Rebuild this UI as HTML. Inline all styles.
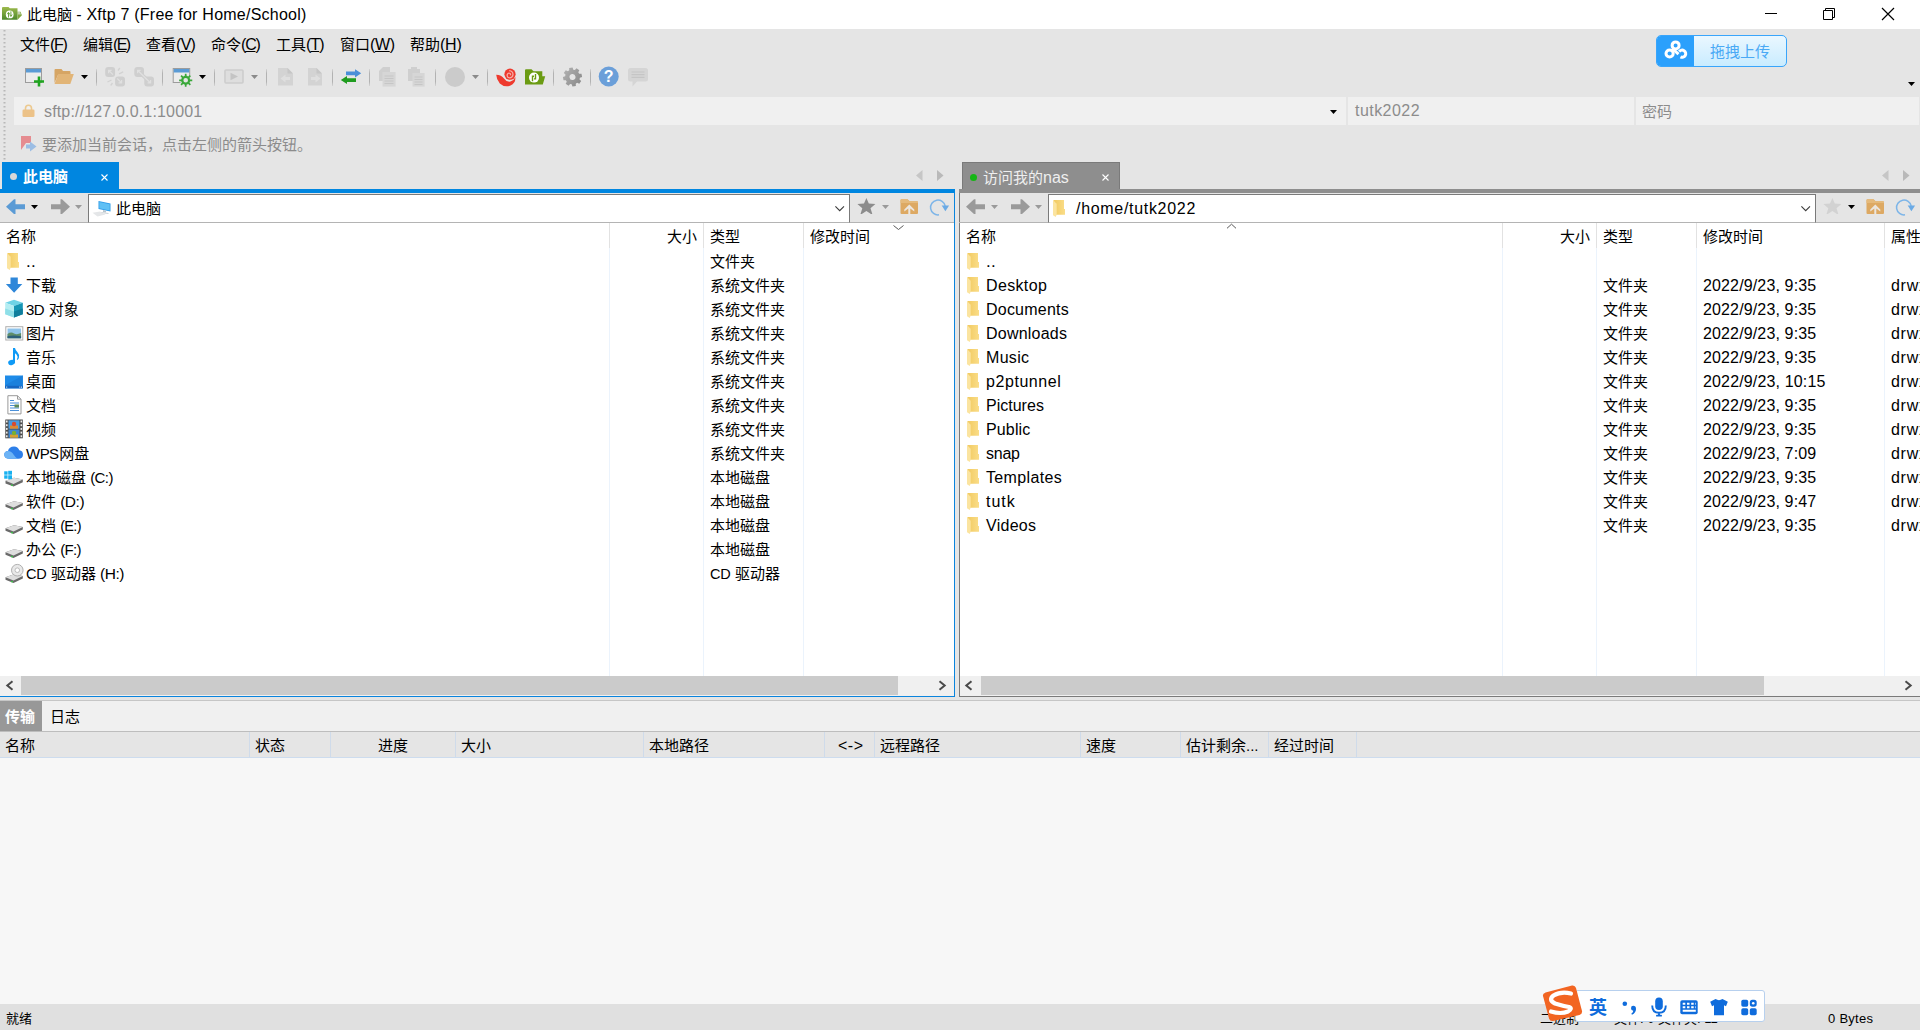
<!DOCTYPE html>
<html lang="zh-CN"><head><meta charset="utf-8"><title>此电脑 - Xftp 7 (Free for Home/School)</title>
<style>
*{box-sizing:border-box;margin:0;padding:0}
html,body{width:1920px;height:1030px;overflow:hidden;background:#e5e5e5}
body{position:relative;font-family:"Liberation Sans","Noto Sans CJK SC",sans-serif;font-size:15px;color:#000}
.a{position:absolute}
.t{position:absolute;white-space:nowrap;line-height:20px;height:20px}
svg{position:absolute;overflow:visible}
#title{left:0;top:0;width:1920px;height:29px;background:#fff}
.fld{background:#f0f0f0;top:97px;height:28px}
.g{color:#8c8c8c}
.sep{width:1px;height:17px;top:69px;background:linear-gradient(rgba(176,176,176,0.3),#b2b2b2 25%,#b2b2b2 75%,rgba(176,176,176,0.3))}
.pane{background:#fff}
.col{width:1px;background:#e8f0fa}
.hl{width:1px;background:#e0e0e0}
.sb{background:#f0f0f0;height:18px}
.th{background:#c9c9c9;height:18px;top:0}
.en{font-size:16px}
</style></head>
<body>
<svg width="0" height="0" style="left:0;top:0"><defs><linearGradient id="fg" x1="0" x2="1" y1="0" y2="0"><stop offset="0" stop-color="#f1c95f"/><stop offset="1" stop-color="#fadd88"/></linearGradient><linearGradient id="ag" x1="0" x2="0" y1="0" y2="1"><stop offset="0" stop-color="#9dba4c"/><stop offset="1" stop-color="#4c882b"/></linearGradient><linearGradient id="gg" x1="0" x2="1" y1="0" y2="1"><stop offset="0" stop-color="#b4b4b4"/><stop offset="1" stop-color="#868686"/></linearGradient></defs></svg>
<div class="a" id="title"></div>
<svg style="left:2px;top:6px" width="24" height="16" viewBox="0 0 24 16"><path d="M0 2Q0 1 1 1H6.500L7.800 2.300H15.500V13.800H0Z" fill="url(#ag)"/><path d="M15.500 5.700H18.500L19.900 9.200L15.500 13.800Z" fill="#7fa83c"/><path d="M15.800 6H18L19 8.500H15.800Z" fill="#c3d0b0"/><circle cx="7.700" cy="8.400" r="3.900" fill="#fff"/><path d="M6.500 11.500V7M5.300 8.200L6.500 6.300L7.700 8.200M8.900 5.300V9.800M7.700 8.600L8.900 10.500L10.100 8.600" stroke="#5e9a2e" stroke-width="0.900" fill="none"/></svg>
<div class="t " style="left:27px;top:5px;">此电脑 <span style="font-size:16px;"><span style="letter-spacing:0.23px">- Xftp 7 (Free for Home/School</span>)</span></div>
<svg style="left:1760px;top:4px" width="140" height="20" viewBox="0 0 140 20"><g fill="none" stroke="#000" stroke-width="1"><path d="M5 9.5H17"/><path d="M63.5 6.5H72.500V15.500H63.500Z"/><path d="M65.5 6.500V4.500H74.500V13.500H72.500"/><path d="M122 4L134 16M134 4L122 16" stroke-width="1.2"/></g></svg>
<div class="a" style="left:8px;top:34px;width:2px;height:405px;"></div>
<svg style="left:3px;top:30px" width="4" height="136"><path d="M1.5 0V136" stroke="#b8b8b8" stroke-width="2" stroke-dasharray="1.5 2.5" fill="none"/></svg>
<div class="t " style="left:20px;top:35px;">文件<span style="font-size:16px"><span style="letter-spacing:-1.27px">(<u>F</u></span>)</span></div>
<div class="t " style="left:83px;top:35px;">编辑<span style="font-size:16px"><span style="letter-spacing:-1.66px">(<u>E</u></span>)</span></div>
<div class="t " style="left:146px;top:35px;">查看<span style="font-size:16px"><span style="letter-spacing:-0.71px">(<u>V</u></span>)</span></div>
<div class="t " style="left:211px;top:35px;">命令<span style="font-size:16px"><span style="letter-spacing:-1.21px">(<u>C</u></span>)</span></div>
<div class="t " style="left:276px;top:35px;">工具<span style="font-size:16px"><span style="letter-spacing:-0.97px">(<u>T</u></span>)</span></div>
<div class="t " style="left:340px;top:35px;">窗口<span style="font-size:16px"><span style="letter-spacing:-0.38px">(<u>W</u></span>)</span></div>
<div class="t " style="left:410px;top:35px;">帮助<span style="font-size:16px"><span style="letter-spacing:-0.26px">(<u>H</u></span>)</span></div>
<div class="a" style="left:1656px;top:35px;width:131px;height:32px;border-radius:5px;border:1px solid #39a5fb;background:linear-gradient(#eaf7ff,#c9ecff);overflow:hidden"><div class="a" style="left:-1px;top:-1px;width:38px;height:32px;background:#2ba0fc"></div></div>
<svg style="left:1663px;top:41px" width="24" height="20" viewBox="0 0 24 20"><g fill="none" stroke="#fff" stroke-width="3"><circle cx="12.600" cy="4.400" r="3.500"/><circle cx="6.600" cy="12.500" r="3.600"/><path d="M16.200 10.600A3.600 3.600 0 1 1 17.500 15.900"/></g><path d="M9.300 7.500L15.500 13.200" stroke="#fff" stroke-width="3"/></svg>
<div class="t " style="left:1710px;top:42px;color:#4aa9f5;font-size:15px">拖拽上传</div>
<svg style="left:1908px;top:82px" width="8" height="5"><path d="M0 0H7L3.5 4Z" fill="#000"/></svg>
<svg style="left:24px;top:66px" width="24" height="22" viewBox="0 0 24 22"><rect x="1.500" y="2.500" width="16" height="14" fill="#ececec" stroke="#9c9c9c"/><rect x="2" y="3" width="15" height="3.500" fill="#5b9bd5"/><path d="M15 10.500V20.500M10 15.500H20" stroke="#1fa51f" stroke-width="2.600" fill="none"/></svg>
<svg style="left:54px;top:66px" width="24" height="22" viewBox="0 0 24 22"><path d="M0.500 4Q0.500 3 1.500 3H7.500L9 5H15.500Q16.500 5 16.500 6V9H4L0.500 17Z" fill="#d6a564"/><path d="M4.200 8H19.800L16.300 18H0.500Z" fill="#e2b577"/></svg>
<svg style="left:81px;top:75px" width="8" height="5"><path d="M0 0H7L3.5 4Z" fill="#000"/></svg>
<div class="a sep" style="left:96px"></div>
<svg style="left:105px;top:66px" width="24" height="22" viewBox="0 0 24 22"><rect x="0.200" y="1" width="9.900" height="10" rx="3" fill="#cfcfcf"/><rect x="10.100" y="10.600" width="9.900" height="9.900" rx="3" fill="#cfcfcf"/><path d="M3.600 7.300V4.300H6.600M3.800 4.500L8 8.700M13.600 16.900H16.600V13.900M16.400 16.700L12.200 12.500" stroke="#e0e0e0" stroke-width="1.200" fill="none"/><path d="M13 4.500L14.800 2M14 7.800L18.200 5.800M6.500 14L2.500 16M7.500 17L5.700 19.500" stroke="#d2d2d2" stroke-width="1.300"/></svg>
<svg style="left:134px;top:66px" width="24" height="22" viewBox="0 0 24 22"><rect x="0.300" y="1" width="9.700" height="10" rx="3" fill="#cfcfcf"/><rect x="10.300" y="10.600" width="9.700" height="9.900" rx="3" fill="#cfcfcf"/><path d="M5 6L15.200 15.500" stroke="#cfcfcf" stroke-width="3.600"/><path d="M3.600 7.300V4.300H6.600M3.800 4.500L16.300 16.800M13.600 16.900H16.600V13.900" stroke="#e0e0e0" stroke-width="1.200" fill="none"/></svg>
<div class="a sep" style="left:162px"></div>
<svg style="left:172px;top:66px" width="24" height="22" viewBox="0 0 24 22"><rect x="1.200" y="2.500" width="16.500" height="14" fill="#ececec" stroke="#9c9c9c"/><rect x="1.700" y="3" width="15.500" height="3.500" fill="#5b9bd5"/><circle cx="13.700" cy="14.300" r="5.800" fill="#e5e5e5"/><path d="M18.21 13.40L20.25 13.47L20.25 15.13L18.21 15.20L17.52 16.86L18.92 18.35L17.75 19.52L16.26 18.12L14.60 18.81L14.53 20.85L12.87 20.85L12.80 18.81L11.14 18.12L9.65 19.52L8.48 18.35L9.88 16.86L9.19 15.20L7.15 15.13L7.15 13.47L9.19 13.40L9.88 11.74L8.48 10.25L9.65 9.08L11.14 10.48L12.80 9.79L12.87 7.75L14.53 7.75L14.60 9.79L16.26 10.48L17.75 9.08L18.92 10.25L17.52 11.74ZM16.00 14.30A2.3 2.3 0 1 0 11.40 14.30A2.3 2.3 0 1 0 16.00 14.30Z" fill="#3aa83a" fill-rule="evenodd"/></svg>
<svg style="left:199px;top:75px" width="8" height="5"><path d="M0 0H7L3.5 4Z" fill="#000"/></svg>
<div class="a sep" style="left:214px"></div>
<svg style="left:222px;top:66px" width="24" height="22" viewBox="0 0 24 22"><rect x="3" y="4" width="18" height="13" rx="1" fill="#dedede" stroke="#cdcdcd" stroke-width="1.600"/><path d="M8.500 6.800V14.200L16 10.500Z" fill="#c4c4c4"/></svg>
<svg style="left:251px;top:75px" width="8" height="5"><path d="M0 0H7L3.5 4Z" fill="#8a8a8a"/></svg>
<div class="a sep" style="left:266px"></div>
<svg style="left:276px;top:66px" width="24" height="22" viewBox="0 0 24 22"><path d="M2 2H11.500L17 7.500V19.500H2Z" fill="#d3d3d3"/><path d="M11.500 2V7.500H17Z" fill="#c6c6c6"/><path d="M4.500 12.500L9.500 8.500V11H14V14H9.500V16.500Z" fill="#dfdfdf"/></svg>
<svg style="left:305px;top:66px" width="24" height="22" viewBox="0 0 24 22"><path d="M3 2H11.500L17 7.500V19.500H3Z" fill="#d3d3d3"/><path d="M11.500 2V7.500H17Z" fill="#c6c6c6"/><path d="M15.500 12.500L10.500 8.500V11H6V14H10.500V16.500Z" fill="#dfdfdf"/></svg>
<div class="a sep" style="left:332px"></div>
<svg style="left:340px;top:66px" width="24" height="22" viewBox="0 0 24 22"><path d="M6 5.500H15V3.200L21.200 7.300L15 11.400V9.200H6Z" fill="#4a8fd8"/><path d="M16 12.200H7V9.900L0.800 14L7 18.100V15.900H16Z" fill="#1f9c1f"/></svg>
<div class="a sep" style="left:369px"></div>
<svg style="left:378px;top:66px" width="24" height="22" viewBox="0 0 24 22"><path d="M1 5L5 1H12V15H1Z" fill="#cfcfcf"/><path d="M4.500 6H17.600V20.600H4.500Z" fill="#d6d6d6"/><path d="M6.500 10H15.500M6.500 12.500H15.500M6.500 15H15.500M6.500 17.500H15.500" stroke="#c6c6c6" stroke-width="1"/></svg>
<svg style="left:407px;top:66px" width="24" height="22" viewBox="0 0 24 22"><path d="M1 3H4V1H10V3H13V15H1Z" fill="#cfcfcf"/><path d="M5.500 7H17.600V20.600H5.500Z" fill="#d6d6d6"/><path d="M7.500 11H15.500M7.500 13.500H15.500M7.500 16H15.500M7.500 18.500H15.500" stroke="#c6c6c6" stroke-width="1"/></svg>
<div class="a sep" style="left:435px"></div>
<svg style="left:444px;top:66px" width="24" height="22" viewBox="0 0 24 22"><circle cx="11" cy="11" r="10" fill="#cbcbcb"/></svg>
<svg style="left:472px;top:75px" width="8" height="5"><path d="M0 0H7L3.5 4Z" fill="#8a8a8a"/></svg>
<div class="a sep" style="left:487px"></div>
<svg style="left:495px;top:66px" width="24" height="22" viewBox="0 0 24 22"><path d="M1.200 8.800Q6.500 9 9 12.500Q11.500 16.300 15.500 15.600Q19 14.600 20.300 11Q21 17 15.500 19.600Q9.500 21.800 4.800 17.500Q1.500 13.800 1.200 8.800Z" fill="#ee3a2e"/><circle cx="15" cy="8.200" r="5.600" fill="#ee3a2e"/><path d="M14.200 4.600Q18 5 18 8.600Q17.500 12 14.300 11.800Q11.800 11.300 12.200 8.800Q12.800 6.800 14.800 7.300Q16 8 15.300 9.300" fill="none" stroke="#f6aaa4" stroke-width="1.300"/></svg>
<svg style="left:524px;top:66px" width="24" height="22" viewBox="0 0 24 22"><path d="M1 4.300Q1 3.300 2 3.300H7.500L9.500 5.300H18.300V10.300H21.200L18.800 18.400H1Z" fill="#6b9b13"/><circle cx="10" cy="11.600" r="5" fill="#fff"/><path d="M8.500 15.300V10.300H10M11.500 7.900V12.900H10" stroke="#6b9b13" stroke-width="1.400" fill="none"/></svg>
<div class="a sep" style="left:553px"></div>
<svg style="left:562px;top:66px" width="24" height="22" viewBox="0 0 24 22"><g transform="rotate(-10 10.5 11)"><path d="M17.61 8.94L19.94 9.27L19.94 12.73L17.61 13.06L16.98 14.56L18.40 16.46L15.96 18.90L14.06 17.48L12.56 18.11L12.23 20.44L8.77 20.44L8.44 18.11L6.94 17.48L5.04 18.90L2.60 16.46L4.02 14.56L3.39 13.06L1.06 12.73L1.06 9.27L3.39 8.94L4.02 7.44L2.60 5.54L5.04 3.10L6.94 4.52L8.44 3.89L8.77 1.56L12.23 1.56L12.56 3.89L14.06 4.52L15.96 3.10L18.40 5.54L16.98 7.44ZM13.50 11.00A3 3 0 1 0 7.50 11.00A3 3 0 1 0 13.50 11.00Z" fill="url(#gg)" fill-rule="evenodd"/></g></svg>
<div class="a sep" style="left:590px"></div>
<svg style="left:598px;top:66px" width="24" height="22" viewBox="0 0 24 22"><circle cx="10.700" cy="10.500" r="10" fill="#6b9fd9"/><text x="10.700" y="16" font-family="Liberation Sans,sans-serif" font-size="16" font-weight="bold" fill="#fff" text-anchor="middle">?</text></svg>
<svg style="left:627px;top:66px" width="24" height="22" viewBox="0 0 24 22"><path d="M3.500 2H18.500Q21 2 21 4.500V13Q21 15.500 18.500 15.500H10L5.500 20.500V15.500H3.500Q1 15.500 1 13V4.500Q1 2 3.500 2Z" fill="#d5d5d5"/><path d="M4.500 6H17.500M4.500 8.700H17.500M4.500 11.400H17.500" stroke="#c5c5c5" stroke-width="1.200"/></svg>
<div class="a fld" style="left:14px;width:1332px"></div>
<div class="a fld" style="left:1348px;width:286px"></div>
<div class="a fld" style="left:1636px;width:283px"></div>
<svg style="left:22px;top:104px" width="13" height="13" viewBox="0 0 13 13"><path d="M3.500 6V4.200A3 3 0 0 1 9.500 4.200V6" fill="none" stroke="#ecc98f" stroke-width="1.600"/><rect x="0.500" y="5.500" width="12" height="7.500" rx="1.300" fill="#ecc288"/></svg>
<div class="t g" style="left:44px;top:102px;"><span style="font-size:16px;"><span style="letter-spacing:0.16px">sftp://127.0.0.1:1000</span>1</span></div>
<svg style="left:1330px;top:110px" width="8" height="5"><path d="M0 0H7L3.5 4Z" fill="#000"/></svg>
<div class="t g" style="left:1355px;top:101px;"><span style="font-size:16px;"><span style="letter-spacing:0.45px">tutk202</span>2</span></div>
<div class="t g" style="left:1642px;top:102px;">密码</div>
<svg style="left:20px;top:135px" width="17" height="18" viewBox="0 0 17 18"><path d="M1 1H11V8L6 8L1 15Z" fill="#e58c90"/><path d="M10 6.500L16.500 11.500L10 16.500V13.500H6V9.500H10Z" fill="#9bbde4"/></svg>
<div class="t g" style="left:42px;top:135px;">要添加当前会话，点击左侧的箭头按钮。</div>
<div class="a" style="left:2px;top:162px;width:117px;height:28px;background:#0086e0;"></div>
<div class="a" style="left:10px;top:173px;width:7px;height:7px;border-radius:50%;background:#d8d8d8"></div>
<div class="t " style="left:23px;top:167px;color:#fff;font-weight:bold;font-size:15px">此电脑</div>
<svg style="left:101px;top:174px" width="7" height="7"><path d="M0.5 0.5L6.5 6.5M6.500 0.500L0.500 6.500" stroke="#fff" stroke-width="1.1" fill="none"/></svg>
<div class="a" style="left:0px;top:189px;width:955px;height:4px;background:#0086e0;"></div>
<svg style="left:916px;top:170px" width="30" height="12"><path d="M6.500 0V11L0 5.500Z" fill="#c6c6c6"/><path d="M21 0V11L27.500 5.500Z" fill="#b9b9b9"/></svg>
<svg style="left:1882px;top:170px" width="30" height="12"><path d="M6.500 0V11L0 5.500Z" fill="#c6c6c6"/><path d="M21 0V11L27.500 5.500Z" fill="#b9b9b9"/></svg>
<div class="a" style="left:962px;top:162px;width:158px;height:28px;background:#8e8e8e;border:1px solid #7a7a7a;border-bottom:0"></div>
<div class="a" style="left:970px;top:174px;width:7px;height:7px;border-radius:50%;background:#14b614"></div>
<div class="t " style="left:983px;top:168px;color:#efefef;font-size:15px">访问我的<span class="en">nas</span></div>
<svg style="left:1102px;top:174px" width="7" height="7"><path d="M0.5 0.5L6.5 6.5M6.500 0.500L0.500 6.500" stroke="#fff" stroke-width="1.1" fill="none"/></svg>
<div class="a" style="left:959px;top:189px;width:961px;height:4px;background:#8e8e8e;"></div>
<div class="a" style="left:0px;top:193px;width:955px;height:30px;background:#e5e5e5;"></div>
<div class="a" style="left:0px;top:223px;width:955px;height:453px;background:#fff;"></div>
<div class="a" style="left:0px;top:676px;width:955px;height:20px;background:#f0f0f0;"></div>
<div class="a" style="left:0px;top:222px;width:955px;height:1px;background:#b4b4b4;"></div>
<div class="a" style="left:954px;top:193px;width:1px;height:504px;background:#0a84dd;"></div>
<div class="a" style="left:0px;top:696px;width:955px;height:1px;background:#0a84dd;"></div>
<div class="a" style="left:959px;top:193px;width:961px;height:30px;background:#e5e5e5;"></div>
<div class="a" style="left:959px;top:223px;width:961px;height:453px;background:#fff;"></div>
<div class="a" style="left:959px;top:676px;width:961px;height:20px;background:#f0f0f0;"></div>
<div class="a" style="left:959px;top:193px;width:1px;height:504px;background:#7a7a7a;"></div>
<div class="a" style="left:959px;top:222px;width:961px;height:1px;background:#b4b4b4;"></div>
<div class="a" style="left:959px;top:696px;width:961px;height:1px;background:#7a7a7a;"></div>
<div class="a" style="left:88px;top:194px;width:762px;height:29px;background:#fff;border:1px solid #7a7a7a;border-bottom-color:#b4b4b4"></div>
<svg style="left:835px;top:206px" width="10" height="6"><path d="M0.400 0.400L4.700 4.700L9 0.400" stroke="#3c3c3c" stroke-width="1.100" fill="none"/></svg>
<div class="a" style="left:1048px;top:194px;width:768px;height:29px;background:#fff;border:1px solid #7a7a7a;border-bottom-color:#b4b4b4"></div>
<svg style="left:1801px;top:206px" width="10" height="6"><path d="M0.400 0.400L4.700 4.700L9 0.400" stroke="#3c3c3c" stroke-width="1.100" fill="none"/></svg>
<svg style="left:6px;top:198px" width="20" height="18" viewBox="0 0 20 18"><path d="M0 8.700L8 1.300H9.500V6.200H19V11.200H9.500V16.100H8Z" fill="#5b9bd5"/></svg>
<svg style="left:31px;top:205px" width="8" height="5"><path d="M0 0H7L3.5 4Z" fill="#000"/></svg>
<svg style="left:50px;top:198px" width="20" height="18" viewBox="0 0 20 18"><path d="M20 8.700L12 1.300H10.500V6.200H1V11.200H10.500V16.100H12Z" fill="#9a9a9a"/></svg>
<svg style="left:75px;top:205px" width="8" height="5"><path d="M0 0H7L3.5 4Z" fill="#9a9a9a"/></svg>
<svg style="left:966px;top:198px" width="20" height="18" viewBox="0 0 20 18"><path d="M0 8.700L8 1.300H9.500V6.200H19V11.200H9.500V16.100H8Z" fill="#9a9a9a"/></svg>
<svg style="left:991px;top:205px" width="8" height="5"><path d="M0 0H7L3.5 4Z" fill="#9a9a9a"/></svg>
<svg style="left:1010px;top:198px" width="20" height="18" viewBox="0 0 20 18"><path d="M20 8.700L12 1.300H10.500V6.200H1V11.200H10.500V16.100H12Z" fill="#9a9a9a"/></svg>
<svg style="left:1035px;top:205px" width="8" height="5"><path d="M0 0H7L3.5 4Z" fill="#9a9a9a"/></svg>
<svg style="left:92px;top:200px" width="20" height="18" viewBox="0 0 20 18"><path d="M6.500 1L18.500 3.500V11.500L6.500 9Z" fill="#2f9be8"/><path d="M7.300 2L17.700 4.200V10.500L7.300 8.300Z" fill="#5fc0f5"/><path d="M11 10L14 10.700V12.500L11 12Z" fill="#b8c4cc"/><path d="M9 12L16.500 13V14L9 13Z" fill="#c8d0d6"/><path d="M0.500 12.800L8 11.500L13.500 14.500L5.500 16.500Z" fill="#e4e6e8"/></svg>
<div class="t " style="left:116px;top:199px;">此电脑</div>
<svg style="left:1052px;top:199px" width="14" height="19" viewBox="0 0 14 19"><path d="M1.200 1H12V10H13V15.800H3V4Z" fill="url(#fg)"/><path d="M1 1.200L4.700 4.800V15.500L3.800 18L1 16.300Z" fill="#fbe4a0"/></svg>
<div class="t " style="left:1076px;top:199px;"><span style="font-size:16px;"><span style="letter-spacing:0.69px">/home/tutk202</span>2</span></div>
<svg style="left:857px;top:198px" width="19" height="18" viewBox="0 0 19 18"><path d="M9.400 0L11.800 5.400L18.400 5.900L13.500 10.200L15.300 16H14L9.400 13L4.800 16H3.500L5.300 10.200L0.400 5.900L7 5.400Z" fill="#8c8c8c"/></svg>
<svg style="left:882px;top:205px" width="8" height="5"><path d="M0 0H7L3.5 4Z" fill="#9a9a9a"/></svg>
<svg style="left:900px;top:198px" width="19" height="19" viewBox="0 0 19 19"><path d="M0.500 2.200Q0.500 1.200 1.500 1.200H7.500L9.500 3.200H17Q18 3.200 18 4.200V15Q18 16 17 16H1.500Q0.500 16 0.500 15Z" fill="#dda963"/><path d="M0.500 2.200Q0.500 1.200 1.500 1.200H7.500L9.500 3.200H17Q18 3.200 18 4.200V5H0.500Z" fill="#e5ba7c"/><path d="M9.300 6.500L14.300 11.500V13.500L10.300 10.500V18.500H8.300V10.500L4.300 13.500V11.500Z" fill="#ece6df"/></svg>
<svg style="left:929px;top:197px" width="22" height="20" viewBox="0 0 22 20"><path d="M10 17.800A7.400 7.400 0 1 1 16.200 9" fill="none" stroke="#7db5e8" stroke-width="1.500"/><path d="M12.700 8.500H20.100L16.400 14.200Z" fill="#6aaae5"/></svg>
<svg style="left:1823px;top:198px" width="19" height="18" viewBox="0 0 19 18"><path d="M9.400 0L11.800 5.400L18.400 5.900L13.500 10.200L15.300 16H14L9.400 13L4.800 16H3.500L5.300 10.200L0.400 5.900L7 5.400Z" fill="#d2d2d2"/></svg>
<svg style="left:1848px;top:205px" width="8" height="5"><path d="M0 0H7L3.5 4Z" fill="#000"/></svg>
<svg style="left:1866px;top:198px" width="19" height="19" viewBox="0 0 19 19"><path d="M0.500 2.200Q0.500 1.200 1.500 1.200H7.500L9.500 3.200H17Q18 3.200 18 4.200V15Q18 16 17 16H1.500Q0.500 16 0.500 15Z" fill="#dda963"/><path d="M0.500 2.200Q0.500 1.200 1.500 1.200H7.500L9.500 3.200H17Q18 3.200 18 4.200V5H0.500Z" fill="#e5ba7c"/><path d="M9.300 6.500L14.300 11.500V13.500L10.300 10.500V18.500H8.300V10.500L4.300 13.500V11.500Z" fill="#ece6df"/></svg>
<svg style="left:1895px;top:197px" width="22" height="20" viewBox="0 0 22 20"><path d="M10 17.800A7.400 7.400 0 1 1 16.200 9" fill="none" stroke="#7db5e8" stroke-width="1.500"/><path d="M12.700 8.500H20.100L16.400 14.200Z" fill="#6aaae5"/></svg>
<div class="a" style="left:609px;top:223px;width:1px;height:25px;background:#e2e2e2;"></div>
<div class="a" style="left:609px;top:248px;width:1px;height:428px;background:#ebf3fc;"></div>
<div class="a" style="left:703px;top:223px;width:1px;height:25px;background:#e2e2e2;"></div>
<div class="a" style="left:703px;top:248px;width:1px;height:428px;background:#ebf3fc;"></div>
<div class="a" style="left:803px;top:223px;width:1px;height:25px;background:#e2e2e2;"></div>
<div class="a" style="left:803px;top:248px;width:1px;height:428px;background:#ebf3fc;"></div>
<div class="a" style="left:1502px;top:223px;width:1px;height:25px;background:#e2e2e2;"></div>
<div class="a" style="left:1502px;top:248px;width:1px;height:428px;background:#ebf3fc;"></div>
<div class="a" style="left:1596px;top:223px;width:1px;height:25px;background:#e2e2e2;"></div>
<div class="a" style="left:1596px;top:248px;width:1px;height:428px;background:#ebf3fc;"></div>
<div class="a" style="left:1696px;top:223px;width:1px;height:25px;background:#e2e2e2;"></div>
<div class="a" style="left:1696px;top:248px;width:1px;height:428px;background:#ebf3fc;"></div>
<div class="a" style="left:1884px;top:223px;width:1px;height:25px;background:#e2e2e2;"></div>
<div class="a" style="left:1884px;top:248px;width:1px;height:428px;background:#ebf3fc;"></div>
<div class="t " style="left:6px;top:227px;">名称</div>
<div class="t " style="left:667px;top:227px;">大小</div>
<div class="t " style="left:710px;top:227px;">类型</div>
<div class="t " style="left:810px;top:227px;">修改时间</div>
<svg style="left:893px;top:225px" width="11" height="6"><path d="M0.5 0.500L5.500 4.500L10.5 0.500" stroke="#5a5a5a" stroke-width="1" fill="none"/></svg>
<div class="t " style="left:966px;top:227px;">名称</div>
<div class="t " style="left:1560px;top:227px;">大小</div>
<div class="t " style="left:1603px;top:227px;">类型</div>
<div class="t " style="left:1703px;top:227px;">修改时间</div>
<div class="t " style="left:1891px;top:227px;">属性</div>
<svg style="left:1226px;top:223px" width="11" height="6"><path d="M1 5.300L5.500 1.200L10 5.300" stroke="#5a5a5a" stroke-width="1" fill="none"/></svg>
<svg style="left:6px;top:252px" width="14" height="19" viewBox="0 0 14 19"><path d="M1.200 1H12V10H13V15.800H3V4Z" fill="url(#fg)"/><path d="M1 1.200L4.700 4.800V15.500L3.800 18L1 16.300Z" fill="#fbe4a0"/></svg>
<div class="t " style="left:26px;top:252px;"><span style="font-size:17px;letter-spacing:0.2px">..</span></div>
<div class="t " style="left:710px;top:252px;">文件夹</div>
<svg style="left:5px;top:275px" width="19" height="20" viewBox="0 0 19 20"><path d="M5.500 2.400H12.800V9H17.300L9.100 17.800L0.900 9H5.500Z" fill="#2f87d9"/></svg>
<div class="t " style="left:26px;top:276px;">下载</div>
<div class="t " style="left:710px;top:276px;">系统文件夹</div>
<svg style="left:5px;top:299px" width="19" height="20" viewBox="0 0 19 20"><path d="M9 0.800L17.800 3.800L9 7L0.200 3.800Z" fill="#6fd3e6"/><path d="M0.200 3.800L9 7V18.600L0.200 15.200Z" fill="#b4edf2"/><path d="M17.800 3.800L9 7V18.600L17.800 15.200Z" fill="#1795b4"/><path d="M9 12.500L17.800 9.500V15.200L9 18.600Z" fill="#0f7d9c"/><path d="M0.200 9.500L9 12.500V18.600L0.200 15.200Z" fill="#8fdfe8"/></svg>
<div class="t " style="left:26px;top:300px;"><span style=""><span style="letter-spacing:-0.68px">3</span>D</span> 对象</div>
<div class="t " style="left:710px;top:300px;">系统文件夹</div>
<svg style="left:5px;top:323px" width="19" height="20" viewBox="0 0 19 20"><rect x="0.800" y="3.700" width="17" height="13.300" fill="#fff" stroke="#aeaeae"/><rect x="2.500" y="5.500" width="13.600" height="9.700" fill="#8fc3ea"/><path d="M2.500 11Q6 8.500 9 10.500Q12 12 16.100 10V15.200H2.500Z" fill="#5f8d6a"/><path d="M2.500 13.200Q8 12 16.100 13.200V15.200H2.500Z" fill="#2d5f7a"/></svg>
<div class="t " style="left:26px;top:324px;">图片</div>
<div class="t " style="left:710px;top:324px;">系统文件夹</div>
<svg style="left:5px;top:347px" width="19" height="20" viewBox="0 0 19 20"><path d="M8 0.900H10V15.500H8Z" fill="#0f9af6"/><ellipse cx="6.600" cy="15.400" rx="3.500" ry="2.600" transform="rotate(-15 6.600 15.400)" fill="#0f9af6"/><path d="M10 0.900Q10.500 3.500 12.500 5.300Q15 8 13.900 11Q13.300 12.500 12.200 12.900Q11.500 12.600 12 11.900Q13.200 9.500 11.500 7.500Q10.500 6.400 10 6.200Z" fill="#0f9af6"/></svg>
<div class="t " style="left:26px;top:348px;">音乐</div>
<div class="t " style="left:710px;top:348px;">系统文件夹</div>
<svg style="left:5px;top:371px" width="19" height="20" viewBox="0 0 19 20"><rect x="0" y="4.500" width="17.800" height="12.800" fill="#1e8be8"/><path d="M0 14.300L17.800 4.500V17.300H0Z" fill="#1a80dc"/><rect x="0" y="14.800" width="17.800" height="2.500" fill="#1565c0"/><rect x="1.200" y="15.600" width="1" height="1" fill="#fff"/><rect x="14.300" y="15.600" width="1" height="1" fill="#fff"/><rect x="16" y="15.600" width="1" height="1" fill="#fff"/></svg>
<div class="t " style="left:26px;top:372px;">桌面</div>
<div class="t " style="left:710px;top:372px;">系统文件夹</div>
<svg style="left:5px;top:395px" width="19" height="20" viewBox="0 0 19 20"><path d="M2.900 0.700H12.500L16 4.200V18.900H2.900Z" fill="#fff" stroke="#9a9a9a"/><path d="M12.500 0.700V4.200H16" fill="none" stroke="#9a9a9a"/><path d="M5 5.500H9M5 8H14M5 10.500H14M5 13H14M5 15.500H14" stroke="#4a90d9" stroke-width="1"/><rect x="9.500" y="9.500" width="4.500" height="3" fill="#5d8a5a"/></svg>
<div class="t " style="left:26px;top:396px;">文档</div>
<div class="t " style="left:710px;top:396px;">系统文件夹</div>
<svg style="left:5px;top:419px" width="19" height="20" viewBox="0 0 19 20"><rect x="0.300" y="0.500" width="17.500" height="18.800" fill="#4a4a4a"/><rect x="3.500" y="1.300" width="11" height="8.400" fill="#4a9be0"/><rect x="3.500" y="10.500" width="11" height="8.200" fill="#3f86d0"/><rect x="5" y="6.500" width="8" height="3.200" fill="#e08a30"/><rect x="5" y="15.500" width="8" height="3.200" fill="#d9a030"/><circle cx="9" cy="5" r="2.200" fill="#d84a30"/><circle cx="9" cy="14" r="2.200" fill="#7ab030"/><g fill="#e8e8e8"><rect x="1" y="1.500" width="1.600" height="2"/><rect x="1" y="5.200" width="1.600" height="2"/><rect x="1" y="8.900" width="1.600" height="2"/><rect x="1" y="12.600" width="1.600" height="2"/><rect x="1" y="16.300" width="1.600" height="2"/><rect x="15.500" y="1.500" width="1.600" height="2"/><rect x="15.500" y="5.200" width="1.600" height="2"/><rect x="15.500" y="8.900" width="1.600" height="2"/><rect x="15.500" y="12.600" width="1.600" height="2"/><rect x="15.500" y="16.300" width="1.600" height="2"/></g></svg>
<div class="t " style="left:26px;top:420px;">视频</div>
<div class="t " style="left:710px;top:420px;">系统文件夹</div>
<svg style="left:5px;top:443px" width="19" height="20" viewBox="0 0 19 20"><path d="M4.500 15.700Q-0.800 15.700 -0.800 11.500Q-0.500 8.200 3 8Q4 3.700 9 3.500Q13 3.700 14.300 7.300Q18 7.800 18 11.700Q17.800 15.700 13.500 15.700Z" fill="#2d7fe9"/><path d="M-0.800 11.500Q-0.500 8.200 3 8Q6.500 8 8.500 11.500Q10 14 12.500 15.700H4.500Q-0.800 15.700 -0.800 11.500Z" fill="#6db3f5"/></svg>
<div class="t " style="left:26px;top:444px;"><span style=""><span style="letter-spacing:-0.53px">WP</span>S</span>网盘</div>
<div class="t " style="left:710px;top:444px;">系统文件夹</div>
<svg style="left:5px;top:467px" width="19" height="20" viewBox="0 0 19 20"><path d="M0.500 13.8 L9 10.8 L17.800 12.6 V 15.2 L8.500 19.6 L0.500 16.4 Z" fill="#6a6a6a"/><path d="M0.500 13.8 L9 10.8 L17.800 12.6 L8.500 17.1 Z" fill="#dedede"/><rect x="6.200" y="17.5" width="1.600" height="1.400" fill="#35d045"/><g fill="#19b1f0"><rect x="-0.800" y="4.300" width="3.400" height="3.400"/><rect x="3.200" y="3.800" width="3.800" height="3.900"/><rect x="-0.800" y="8.300" width="3.400" height="3.400"/><rect x="3.200" y="8.300" width="3.800" height="3.900"/></g></svg>
<div class="t " style="left:26px;top:468px;">本地磁盘 <span style=""><span style="letter-spacing:-0.60px">(C:</span>)</span></div>
<div class="t " style="left:710px;top:468px;">本地磁盘</div>
<svg style="left:5px;top:491px" width="19" height="20" viewBox="0 0 19 20"><path d="M0.500 13.2 L9 10.2 L17.800 12.0 V 14.6 L8.500 19.0 L0.500 15.8 Z" fill="#6a6a6a"/><path d="M0.500 13.2 L9 10.2 L17.800 12.0 L8.500 16.5 Z" fill="#dedede"/><rect x="6.200" y="16.9" width="1.600" height="1.400" fill="#35d045"/></svg>
<div class="t " style="left:26px;top:492px;">软件 <span style="font-size:15.5px;"><span style="letter-spacing:-0.47px">(D:</span>)</span></div>
<div class="t " style="left:710px;top:492px;">本地磁盘</div>
<svg style="left:5px;top:515px" width="19" height="20" viewBox="0 0 19 20"><path d="M0.500 13.2 L9 10.2 L17.800 12.0 V 14.6 L8.500 19.0 L0.500 15.8 Z" fill="#6a6a6a"/><path d="M0.500 13.2 L9 10.2 L17.800 12.0 L8.500 16.5 Z" fill="#dedede"/><rect x="6.200" y="16.9" width="1.600" height="1.400" fill="#35d045"/></svg>
<div class="t " style="left:26px;top:516px;">文档 <span style="font-size:14.5px;"><span style="letter-spacing:-0.69px">(E:</span>)</span></div>
<div class="t " style="left:710px;top:516px;">本地磁盘</div>
<svg style="left:5px;top:539px" width="19" height="20" viewBox="0 0 19 20"><path d="M0.500 13.2 L9 10.2 L17.800 12.0 V 14.6 L8.500 19.0 L0.500 15.8 Z" fill="#6a6a6a"/><path d="M0.500 13.2 L9 10.2 L17.800 12.0 L8.500 16.5 Z" fill="#dedede"/><rect x="6.200" y="16.9" width="1.600" height="1.400" fill="#35d045"/></svg>
<div class="t " style="left:26px;top:540px;">办公 <span style=""><span style="letter-spacing:-0.67px">(F:</span>)</span></div>
<div class="t " style="left:710px;top:540px;">本地磁盘</div>
<svg style="left:5px;top:563px" width="19" height="20" viewBox="0 0 19 20"><path d="M0.500 14.2 L9 11.2 L17.800 13.0 V 15.6 L8.500 20.0 L0.500 16.8 Z" fill="#6a6a6a"/><path d="M0.500 14.2 L9 11.2 L17.800 13.0 L8.500 17.5 Z" fill="#dedede"/><rect x="6.200" y="17.9" width="1.600" height="1.400" fill="#35d045"/><circle cx="12.300" cy="7.200" r="5.800" fill="#e9e9e9" stroke="#a8a8a8" stroke-width="0.900"/><circle cx="12.300" cy="7.200" r="2.300" fill="#fff" stroke="#b5b5b5" stroke-width="0.900"/></svg>
<div class="t " style="left:26px;top:564px;"><span style="font-size:14.5px;"><span style="letter-spacing:-0.24px">C</span>D</span> 驱动器 <span style="font-size:15.5px;"><span style="letter-spacing:-0.47px">(H:</span>)</span></div>
<div class="t " style="left:710px;top:564px;"><span style="font-size:14.5px;"><span style="letter-spacing:-0.24px">C</span>D</span> 驱动器</div>
<div class="a" style="left:959px;top:223px;width:961px;height:453px;overflow:hidden">
<svg style="left:7px;top:29px" width="14" height="19" viewBox="0 0 14 19"><path d="M1.200 1H12V10H13V15.800H3V4Z" fill="url(#fg)"/><path d="M1 1.200L4.700 4.800V15.500L3.800 18L1 16.300Z" fill="#fbe4a0"/></svg>
<div class="t " style="left:27px;top:29px;"><span style="font-size:17px;letter-spacing:0.2px">..</span></div>
<svg style="left:7px;top:53px" width="14" height="19" viewBox="0 0 14 19"><path d="M1.200 1H12V10H13V15.800H3V4Z" fill="url(#fg)"/><path d="M1 1.200L4.700 4.800V15.500L3.800 18L1 16.300Z" fill="#fbe4a0"/></svg>
<div class="t " style="left:27px;top:53px;"><span style="font-size:16px;"><span style="letter-spacing:0.35px">Deskto</span>p</span></div>
<div class="t " style="left:644px;top:53px;">文件夹</div>
<div class="t " style="left:744px;top:53px;"><span style="font-size:16px;"><span style="letter-spacing:0.14px">2022/9/23, 9:3</span>5</span></div>
<div class="t en" style="left:932px;top:53px;letter-spacing:0.7px">drwxr-xr-x</div>
<svg style="left:7px;top:77px" width="14" height="19" viewBox="0 0 14 19"><path d="M1.200 1H12V10H13V15.800H3V4Z" fill="url(#fg)"/><path d="M1 1.200L4.700 4.800V15.500L3.800 18L1 16.300Z" fill="#fbe4a0"/></svg>
<div class="t " style="left:27px;top:77px;"><span style="font-size:16px;"><span style="letter-spacing:0.22px">Document</span>s</span></div>
<div class="t " style="left:644px;top:77px;">文件夹</div>
<div class="t " style="left:744px;top:77px;"><span style="font-size:16px;"><span style="letter-spacing:0.14px">2022/9/23, 9:3</span>5</span></div>
<div class="t en" style="left:932px;top:77px;letter-spacing:0.7px">drwxr-xr-x</div>
<svg style="left:7px;top:101px" width="14" height="19" viewBox="0 0 14 19"><path d="M1.200 1H12V10H13V15.800H3V4Z" fill="url(#fg)"/><path d="M1 1.200L4.700 4.800V15.500L3.800 18L1 16.300Z" fill="#fbe4a0"/></svg>
<div class="t " style="left:27px;top:101px;"><span style="font-size:16px;"><span style="letter-spacing:0.22px">Download</span>s</span></div>
<div class="t " style="left:644px;top:101px;">文件夹</div>
<div class="t " style="left:744px;top:101px;"><span style="font-size:16px;"><span style="letter-spacing:0.14px">2022/9/23, 9:3</span>5</span></div>
<div class="t en" style="left:932px;top:101px;letter-spacing:0.7px">drwxr-xr-x</div>
<svg style="left:7px;top:125px" width="14" height="19" viewBox="0 0 14 19"><path d="M1.200 1H12V10H13V15.800H3V4Z" fill="url(#fg)"/><path d="M1 1.200L4.700 4.800V15.500L3.800 18L1 16.300Z" fill="#fbe4a0"/></svg>
<div class="t " style="left:27px;top:125px;"><span style="font-size:16px;"><span style="letter-spacing:0.30px">Musi</span>c</span></div>
<div class="t " style="left:644px;top:125px;">文件夹</div>
<div class="t " style="left:744px;top:125px;"><span style="font-size:16px;"><span style="letter-spacing:0.14px">2022/9/23, 9:3</span>5</span></div>
<div class="t en" style="left:932px;top:125px;letter-spacing:0.7px">drwxr-xr-x</div>
<svg style="left:7px;top:149px" width="14" height="19" viewBox="0 0 14 19"><path d="M1.200 1H12V10H13V15.800H3V4Z" fill="url(#fg)"/><path d="M1 1.200L4.700 4.800V15.500L3.800 18L1 16.300Z" fill="#fbe4a0"/></svg>
<div class="t " style="left:27px;top:149px;"><span style="font-size:16px;"><span style="letter-spacing:0.56px">p2ptunne</span>l</span></div>
<div class="t " style="left:644px;top:149px;">文件夹</div>
<div class="t " style="left:744px;top:149px;"><span style="font-size:16px;"><span style="letter-spacing:0.15px">2022/9/23, 10:1</span>5</span></div>
<div class="t en" style="left:932px;top:149px;letter-spacing:0.7px">drwxr-xr-x</div>
<svg style="left:7px;top:173px" width="14" height="19" viewBox="0 0 14 19"><path d="M1.200 1H12V10H13V15.800H3V4Z" fill="url(#fg)"/><path d="M1 1.200L4.700 4.800V15.500L3.800 18L1 16.300Z" fill="#fbe4a0"/></svg>
<div class="t " style="left:27px;top:173px;"><span style="font-size:16px;"><span style="letter-spacing:0.01px">Picture</span>s</span></div>
<div class="t " style="left:644px;top:173px;">文件夹</div>
<div class="t " style="left:744px;top:173px;"><span style="font-size:16px;"><span style="letter-spacing:0.14px">2022/9/23, 9:3</span>5</span></div>
<div class="t en" style="left:932px;top:173px;letter-spacing:0.7px">drwxr-xr-x</div>
<svg style="left:7px;top:197px" width="14" height="19" viewBox="0 0 14 19"><path d="M1.200 1H12V10H13V15.800H3V4Z" fill="url(#fg)"/><path d="M1 1.200L4.700 4.800V15.500L3.800 18L1 16.300Z" fill="#fbe4a0"/></svg>
<div class="t " style="left:27px;top:197px;"><span style="font-size:16px;"><span style="letter-spacing:0.14px">Publi</span>c</span></div>
<div class="t " style="left:644px;top:197px;">文件夹</div>
<div class="t " style="left:744px;top:197px;"><span style="font-size:16px;"><span style="letter-spacing:0.14px">2022/9/23, 9:3</span>5</span></div>
<div class="t en" style="left:932px;top:197px;letter-spacing:0.7px">drwxr-xr-x</div>
<svg style="left:7px;top:221px" width="14" height="19" viewBox="0 0 14 19"><path d="M1.200 1H12V10H13V15.800H3V4Z" fill="url(#fg)"/><path d="M1 1.200L4.700 4.800V15.500L3.800 18L1 16.300Z" fill="#fbe4a0"/></svg>
<div class="t " style="left:27px;top:221px;"><span style="font-size:16px;"><span style="letter-spacing:-0.23px">sna</span>p</span></div>
<div class="t " style="left:644px;top:221px;">文件夹</div>
<div class="t " style="left:744px;top:221px;"><span style="font-size:16px;"><span style="letter-spacing:0.14px">2022/9/23, 7:0</span>9</span></div>
<div class="t en" style="left:932px;top:221px;letter-spacing:0.7px">drwxr-xr-x</div>
<svg style="left:7px;top:245px" width="14" height="19" viewBox="0 0 14 19"><path d="M1.200 1H12V10H13V15.800H3V4Z" fill="url(#fg)"/><path d="M1 1.200L4.700 4.800V15.500L3.800 18L1 16.300Z" fill="#fbe4a0"/></svg>
<div class="t " style="left:27px;top:245px;"><span style="font-size:16px;"><span style="letter-spacing:0.35px">Template</span>s</span></div>
<div class="t " style="left:644px;top:245px;">文件夹</div>
<div class="t " style="left:744px;top:245px;"><span style="font-size:16px;"><span style="letter-spacing:0.14px">2022/9/23, 9:3</span>5</span></div>
<div class="t en" style="left:932px;top:245px;letter-spacing:0.7px">drwxr-xr-x</div>
<svg style="left:7px;top:269px" width="14" height="19" viewBox="0 0 14 19"><path d="M1.200 1H12V10H13V15.800H3V4Z" fill="url(#fg)"/><path d="M1 1.200L4.700 4.800V15.500L3.800 18L1 16.300Z" fill="#fbe4a0"/></svg>
<div class="t " style="left:27px;top:269px;"><span style="font-size:16px;"><span style="letter-spacing:1.00px">tut</span>k</span></div>
<div class="t " style="left:644px;top:269px;">文件夹</div>
<div class="t " style="left:744px;top:269px;"><span style="font-size:16px;"><span style="letter-spacing:0.14px">2022/9/23, 9:4</span>7</span></div>
<div class="t en" style="left:932px;top:269px;letter-spacing:0.7px">drwxr-xr-x</div>
<svg style="left:7px;top:293px" width="14" height="19" viewBox="0 0 14 19"><path d="M1.200 1H12V10H13V15.800H3V4Z" fill="url(#fg)"/><path d="M1 1.200L4.700 4.800V15.500L3.800 18L1 16.300Z" fill="#fbe4a0"/></svg>
<div class="t " style="left:27px;top:293px;"><span style="font-size:16px;"><span style="letter-spacing:0.27px">Video</span>s</span></div>
<div class="t " style="left:644px;top:293px;">文件夹</div>
<div class="t " style="left:744px;top:293px;"><span style="font-size:16px;"><span style="letter-spacing:0.14px">2022/9/23, 9:3</span>5</span></div>
<div class="t en" style="left:932px;top:293px;letter-spacing:0.7px">drwxr-xr-x</div>
</div>
<div class="a" style="left:21px;top:676px;width:877px;height:19px;background:#cbcbcb;"></div>
<svg style="left:5px;top:680px" width="8" height="11"><path d="M7.500 1.200L2.300 5.500L7.500 9.800" stroke="#4a4a4a" stroke-width="2" fill="none"/></svg>
<svg style="left:939px;top:680px" width="8" height="11"><path d="M0.500 1.200L5.700 5.500L0.500 9.800" stroke="#4a4a4a" stroke-width="2" fill="none"/></svg>
<div class="a" style="left:981px;top:676px;width:783px;height:19px;background:#cbcbcb;"></div>
<svg style="left:964px;top:680px" width="8" height="11"><path d="M7.500 1.200L2.300 5.500L7.500 9.800" stroke="#4a4a4a" stroke-width="2" fill="none"/></svg>
<svg style="left:1905px;top:680px" width="8" height="11"><path d="M0.500 1.200L5.700 5.500L0.500 9.800" stroke="#4a4a4a" stroke-width="2" fill="none"/></svg>
<div class="a" style="left:0px;top:700px;width:1920px;height:1px;background:#c6c6c6;"></div>
<div class="a" style="left:0px;top:701px;width:1920px;height:30px;background:#f0f0f0;"></div>
<div class="a" style="left:0px;top:701px;width:42px;height:30px;background:#989898;"></div>
<div class="t " style="left:5px;top:707px;color:#fff;font-weight:bold">传输</div>
<div class="t " style="left:50px;top:707px;">日志</div>
<div class="a" style="left:0px;top:731px;width:1920px;height:1px;background:#bdbdbd;"></div>
<div class="a" style="left:0px;top:732px;width:1920px;height:25px;background:#e5e5e5;"></div>
<div class="a" style="left:0px;top:757px;width:1920px;height:1px;background:#cddcee;"></div>
<div class="a" style="left:0px;top:758px;width:1920px;height:246px;background:#f7f7f7;"></div>
<div class="a" style="left:249px;top:732px;width:1px;height:25px;background:#cfdbea;"></div>
<div class="a" style="left:330px;top:732px;width:1px;height:25px;background:#cfdbea;"></div>
<div class="a" style="left:455px;top:732px;width:1px;height:25px;background:#cfdbea;"></div>
<div class="a" style="left:643px;top:732px;width:1px;height:25px;background:#cfdbea;"></div>
<div class="a" style="left:824px;top:732px;width:1px;height:25px;background:#cfdbea;"></div>
<div class="a" style="left:874px;top:732px;width:1px;height:25px;background:#cfdbea;"></div>
<div class="a" style="left:1080px;top:732px;width:1px;height:25px;background:#cfdbea;"></div>
<div class="a" style="left:1180px;top:732px;width:1px;height:25px;background:#cfdbea;"></div>
<div class="a" style="left:1268px;top:732px;width:1px;height:25px;background:#cfdbea;"></div>
<div class="a" style="left:1356px;top:732px;width:1px;height:25px;background:#cfdbea;"></div>
<div class="t " style="left:5px;top:736px;">名称</div>
<div class="t " style="left:255px;top:736px;">状态</div>
<div class="t " style="left:378px;top:736px;">进度</div>
<div class="t " style="left:461px;top:736px;">大小</div>
<div class="t " style="left:649px;top:736px;">本地路径</div>
<div class="t " style="left:838px;top:736px;"><span style="font-size:16px;"><span style="letter-spacing:0.49px">&lt;-</span>&gt;</span></div>
<div class="t " style="left:880px;top:736px;">远程路径</div>
<div class="t " style="left:1086px;top:736px;">速度</div>
<div class="t " style="left:1186px;top:736px;">估计剩余...</div>
<div class="t " style="left:1274px;top:736px;">经过时间</div>
<div class="a" style="left:0px;top:1004px;width:1920px;height:26px;background:#e0e0e0;"></div>
<div class="t " style="left:6px;top:1009px;font-size:13px">就绪</div>
<div class="t " style="left:1540px;top:1009px;font-size:13px">二进制</div>
<div class="t " style="left:1614px;top:1009px;font-size:13px">文件: 0 文件夹: 11</div>
<div class="t " style="left:1828px;top:1009px;font-size:13px"><span style="font-size:13px;"><span style="letter-spacing:0.27px">0 Byte</span>s</span></div>
<div class="a" style="left:1575px;top:990px;width:190px;height:32px;background:#fff;border:1px solid #b7d0ee;border-radius:3px"></div>
<svg style="left:1541px;top:984px" width="44" height="38" viewBox="0 0 44 38"><path d="M4.500 8.500L31 1.500Q34 1 35 4L41 27Q41.500 30 38.500 31L12 37Q9 37.500 8 34.500L2 12Q1.500 9.500 4.500 8.500Z" fill="#f26522"/><path d="M30 9.500Q20 7 12.500 11.500Q7 16 14 19.500Q22 22 28 23Q32 24.500 27 27.500Q20 30.500 10 27.500" fill="none" stroke="#fff" stroke-width="4.200" stroke-linecap="round"/></svg>
<div class="t " style="left:1589px;top:998px;color:#0f6cdc;font-weight:bold;font-size:18px">英</div>
<svg style="left:1620px;top:997px" width="140" height="20" viewBox="0 0 140 20"><circle cx="4.800" cy="6.800" r="2.300" fill="#0f6cdc"/><path d="M13.200 8.800Q16 8.800 16 12Q16 15.800 12 17.800L11.300 16.800Q13.300 15.500 13.300 13.800Q11 13.500 11 11.200Q11 8.800 13.200 8.800Z" fill="#0f6cdc"/><rect x="35.200" y="0.600" width="7.600" height="12.400" rx="3.800" fill="#0f6cdc"/><path d="M32.200 8.500Q32.200 15.800 39 15.800Q45.800 15.800 45.800 8.500M39 15.800V18.500" fill="none" stroke="#0f6cdc" stroke-width="1.900"/><rect x="36" y="17.800" width="6" height="1.800" rx="0.900" fill="#0f6cdc"/><rect x="60.300" y="3.300" width="17.400" height="14" rx="1.800" fill="#0f6cdc"/><path d="M62.700 6.800H65.300M67 6.800H69.500M71.200 6.800H73.700M75.200 6.800H75.800M62.700 10.300H65.300M67 10.300H69.500M71.200 10.300H73.700M75.200 10.300H75.800M62.700 13.800H75.800" stroke="#fff" stroke-width="2.100"/><path d="M95.500 2Q99 4.300 102.500 2L107.800 4.800L106 9.200L104 8.300V18.300H94V8.300L92 9.200L90.200 4.800Z" fill="#0f6cdc"/><g fill="#0f6cdc"><rect x="121.300" y="2.800" width="6.900" height="6.900" rx="1.700"/><rect x="121.300" y="11.300" width="6.900" height="6.900" rx="1.700"/><rect x="129.800" y="11.300" width="6.900" height="6.900" rx="1.700"/><rect x="129.800" y="2.800" width="6.900" height="6.900" rx="2.600"/></g><circle cx="133.250" cy="6.250" r="1.300" fill="#fff"/></svg>
</body></html>
